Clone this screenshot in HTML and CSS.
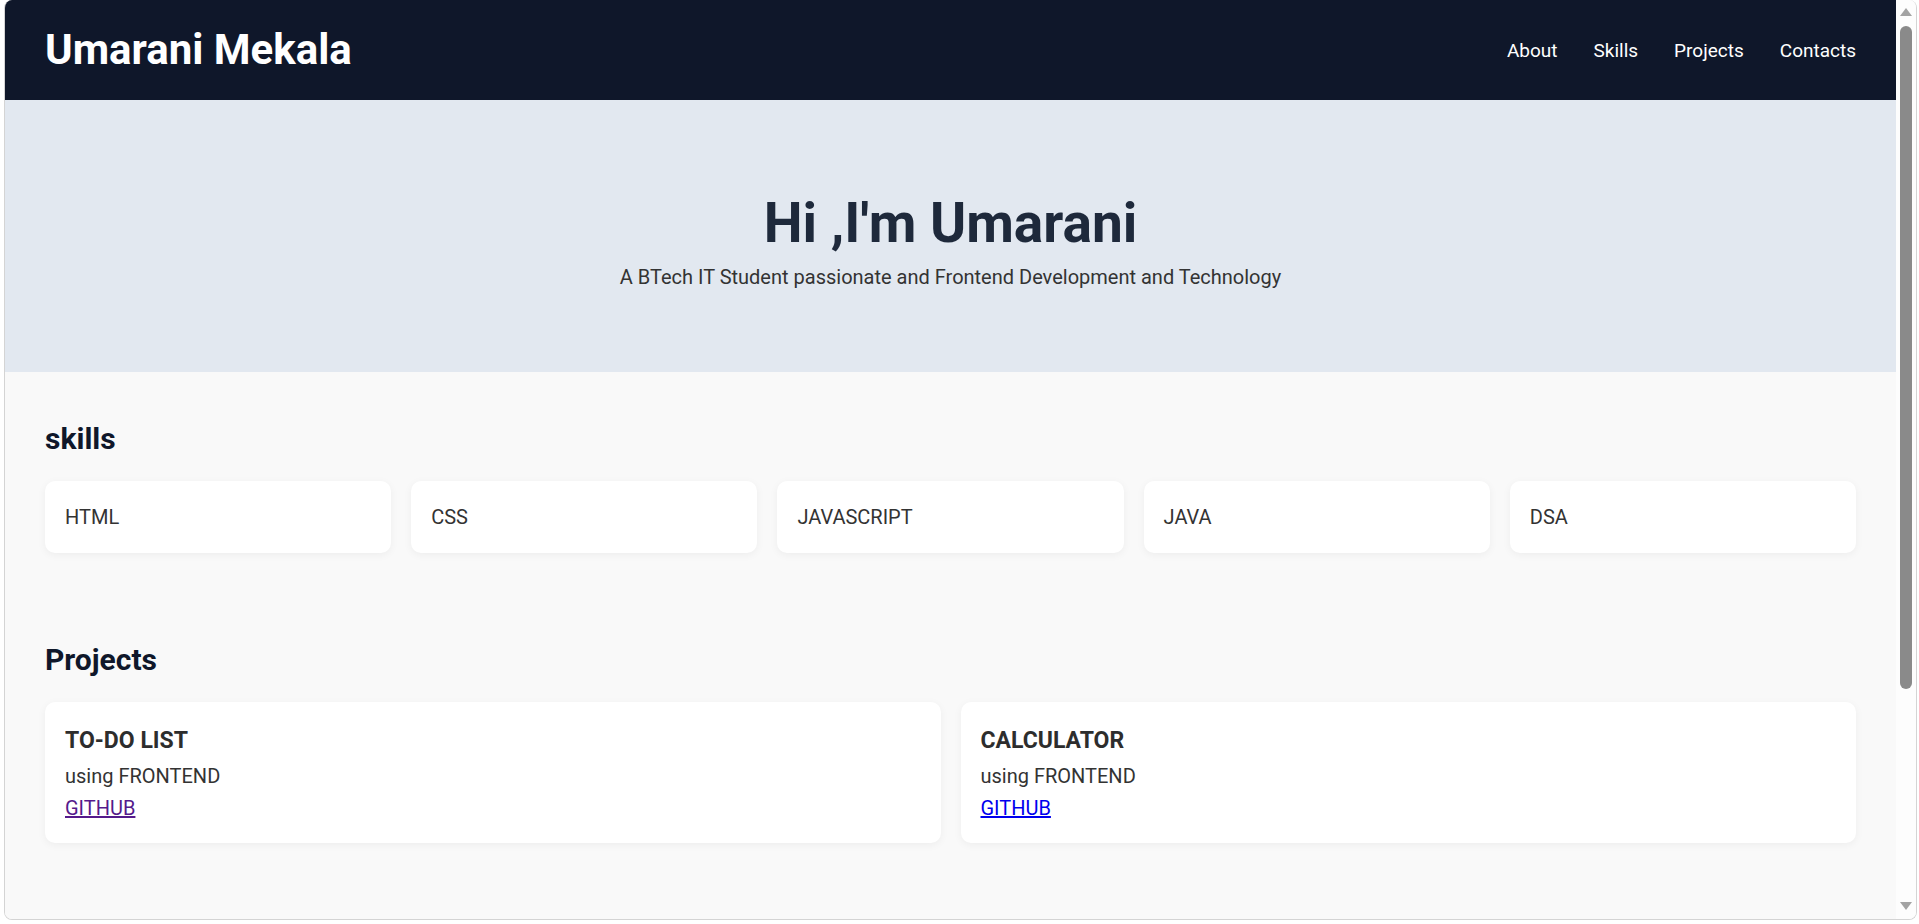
FILE: index.html
```html
<!DOCTYPE html>
<html lang="en">
<head>
<meta charset="utf-8">
<title>Umarani Mekala</title>
<link rel="stylesheet" href="styles.css">
</head>
<body>
<div class="window">
  <div class="page">
    <header class="topbar">
      <div class="brand">Umarani Mekala</div>
      <nav class="nav">
        <a href="#about">About</a>
        <a href="#skills">Skills</a>
        <a href="#projects">Projects</a>
        <a href="#contacts">Contacts</a>
      </nav>
    </header>
    <section class="hero" id="about">
      <h1>Hi ,I'm Umarani</h1>
      <p>A BTech IT Student passionate and Frontend Development and Technology</p>
    </section>
    <section class="section" id="skills">
      <h2>skills</h2>
      <div class="skills-grid">
        <div class="card skill">HTML</div>
        <div class="card skill">CSS</div>
        <div class="card skill">JAVASCRIPT</div>
        <div class="card skill">JAVA</div>
        <div class="card skill">DSA</div>
      </div>
    </section>
    <section class="section" id="projects">
      <h2>Projects</h2>
      <div class="projects-grid">
        <div class="card project">
          <h3>TO-DO LIST</h3>
          <p>using FRONTEND</p>
          <a class="visited" href="#todo">GITHUB</a>
        </div>
        <div class="card project">
          <h3>CALCULATOR</h3>
          <p>using FRONTEND</p>
          <a class="link" href="#calc">GITHUB</a>
        </div>
      </div>
    </section>
  </div>
  <div class="scrollbar">
    <div class="arrow up"></div>
    <div class="thumb"></div>
    <div class="spacer"></div>
    <div class="arrow down"></div>
  </div>
</div>
</body>
</html>
```
FILE: styles.css
```css
* { box-sizing: border-box; }
html, body {
  margin: 0;
  padding: 0;
  background: #ffffff;
  height: 924px;
  overflow: hidden;
}
body {
  font-family: Roboto, "Liberation Sans", sans-serif;
  color: #333;
}
.window {
  margin-left: 4px;
  width: 1913px;
  height: 920px;
  display: flex;
  border: 1px solid #d4d4d4;
  border-top: none;
  border-radius: 8px;
  overflow: hidden;
}
.page {
  flex: 1;
  background: #f9f9f9;
  min-width: 0;
}
.topbar {
  height: 100px;
  background: #0f172a;
  display: flex;
  align-items: center;
  justify-content: space-between;
  padding: 0 40px;
}
.brand {
  color: #ffffff;
  font-size: 42px;
  font-weight: 700;
  line-height: 1;
}
.nav {
  display: flex;
  gap: 36px;
}
.nav a {
  color: #ffffff;
  text-decoration: none;
  font-size: 19px;
  line-height: 1;
}
.hero {
  background: #e2e8f0;
  text-align: center;
  padding: 92px 40px 83px;
}
.hero h1 {
  margin: 0;
  font-size: 55px;
  line-height: 62px;
  font-weight: 700;
  color: #1e293b;
}
.hero p {
  margin: 11px 0 0;
  font-size: 20px;
  line-height: 24px;
  color: #333;
}
.section {
  padding: 43px 40px 40px;
}
.section h2 {
  margin: 0 0 18px;
  font-size: 30px;
  line-height: 48px;
  font-weight: 700;
  color: #0f172a;
}
.skills-grid {
  display: grid;
  grid-template-columns: repeat(5, 1fr);
  gap: 20px;
}
.projects-grid {
  display: grid;
  grid-template-columns: repeat(2, 1fr);
  gap: 20px;
}
.card {
  background: #ffffff;
  border-radius: 10px;
  box-shadow: 0 2px 8px rgba(0, 0, 0, 0.05);
}
.skill {
  padding: 20px;
  font-size: 20px;
  line-height: 32px;
  color: #333;
}
.project {
  padding: 20px 20px 19px;
  font-size: 20px;
  line-height: 32px;
}
.project h3 {
  margin: 0;
  font-size: 23px;
  line-height: 38px;
  font-weight: 700;
  color: #2d2d2d;
}
.project p {
  margin: 0;
  color: #333;
}
.project a {
  display: block;
  width: max-content;
  text-decoration: underline;
}
.project a.visited { color: #551a8b; }
.project a.link { color: #0000ee; }
.scrollbar {
  width: 20px;
  background: #fdfdfd;
  display: flex;
  flex-direction: column;
  align-items: center;
  padding: 8px 0 9px;
}
.arrow {
  width: 0;
  height: 0;
  border-left: 6px solid transparent;
  border-right: 6px solid transparent;
}
.arrow.up { border-bottom: 8px solid #a3a3a3; }
.arrow.down { border-top: 8px solid #a3a3a3; }
.thumb {
  margin-top: 10px;
  width: 12px;
  height: 663px;
  background: #8a8a8a;
  border-radius: 6px;
}
.spacer { flex: 1; }
```
